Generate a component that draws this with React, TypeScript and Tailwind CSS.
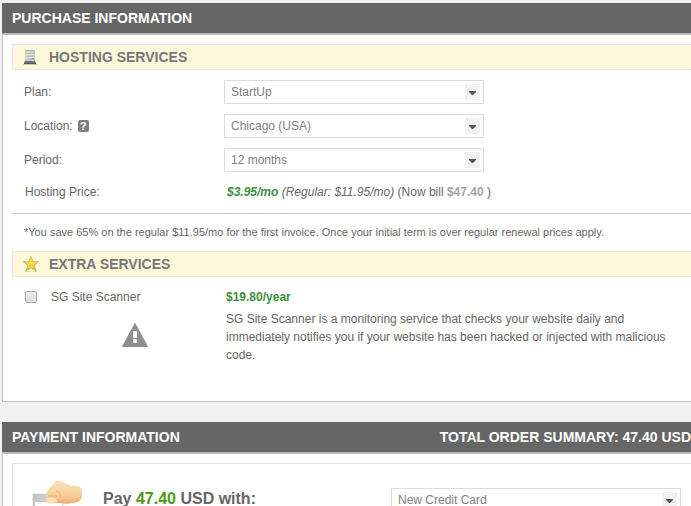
import type { ReactNode } from 'react'

export default function App() {
  return (
    <div className="h-screen overflow-hidden bg-[#f1f1f1] pt-[3px] pl-[2px] font-['Liberation_Sans',Arial,sans-serif] text-xs leading-[18px] text-[#666]">
      {/* Purchase information */}
      <section>
        <PanelHeader title="PURCHASE INFORMATION" />
        <div className="border-b border-l border-[#c4c4c4] bg-white pt-[9px] pb-[37px] pl-[9px]">
          <SectionTitle icon={<ServerIcon />} title="HOSTING SERVICES" />

          <div className="mt-[10px] flex flex-col gap-[10px] pl-3">
            <FormRow id="plan" label="Plan:">
              <SelectBox id="plan" options={['StartUp', 'GrowBig', 'GoGeek']} />
            </FormRow>
            <FormRow id="location" label="Location:" help>
              <SelectBox id="location" options={['Chicago (USA)', 'London (UK)', 'Singapore (SG)']} />
            </FormRow>
            <FormRow id="period" label="Period:">
              <SelectBox id="period" options={['12 months', '24 months', '36 months']} />
            </FormRow>
            <div className="flex leading-5">
              <div className="w-[202px] shrink-0 pl-px">Hosting Price:</div>
              <div className="whitespace-nowrap pl-px">
                <em>
                  <b className="text-[#3c9040]">$3.95/mo</b> (Regular: $11.95/mo)
                </em>{' '}
                (Now bill <b className="text-[#a3a3a3]">$47.40</b> )
              </div>
            </div>
          </div>

          <hr className="mt-[11px] border-[#ccc]" />
          <p className="my-[9px] pl-3 text-[11px] leading-[19px]">
            *You save 65% on the regular $11.95/mo for the first invoice. Once your initial term is over regular
            renewal prices apply.
          </p>

          <SectionTitle icon={<StarIcon />} title="EXTRA SERVICES" />

          <div className="mt-[11px] flex pl-[13px]">
            <div className="w-[201px] shrink-0">
              <label className="flex items-center gap-[14px]">
                <input
                  type="checkbox"
                  className="h-3 w-3 appearance-none rounded-[2px] border border-[#a9a9a9] bg-gradient-to-b from-[#eee] to-[#dcdcdc] checked:bg-[#999]"
                />
                SG Site Scanner
              </label>
              <WarningIcon />
            </div>
            <div className="max-w-[450px]">
              <b className="block text-[#3c9040]">$19.80/year</b>
              <p className="mt-1">
                SG Site Scanner is a monitoring service that checks your website daily and immediately notifies you if
                your website has been hacked or injected with malicious code.
              </p>
            </div>
          </div>
        </div>
      </section>

      {/* Payment information */}
      <section className="mt-5">
        <PanelHeader title="PAYMENT INFORMATION" summary="TOTAL ORDER SUMMARY: 47.40 USD" />
        <div className="border-l border-[#c4c4c4] bg-white pt-[9px] pl-[9px]">
          <div className="flex items-start border-t border-l border-[#e6e6e6] pt-4 pr-[10px] pb-5 pl-[19px]">
            <HandCardIcon />
            <label htmlFor="payment" className="mt-[9px] ml-5 grow text-base leading-5 font-bold">
              Pay <span className="text-[#4f9a14]">47.40</span> USD with:
            </label>
            <div className="mt-2 w-[290px]">
              <SelectBox id="payment" options={['New Credit Card', 'PayPal']} />
            </div>
          </div>
        </div>
      </section>
    </div>
  )
}

function PanelHeader({ title, summary }: { title: string; summary?: string }) {
  return (
    <header className="flex h-8 items-center justify-between border-b-2 border-[#b9b9b9] bg-[#666] pl-[10px] text-sm font-bold whitespace-nowrap text-white">
      <h2>{title}</h2>
      {summary && <span>{summary}</span>}
    </header>
  )
}

function SectionTitle({ icon, title }: { icon: ReactNode; title: string }) {
  return (
    <div className="flex h-[26px] items-center gap-[10px] border-y border-l border-[#e8e8e8] bg-[#fef8da] pl-[10px]">
      {icon}
      <h3 className="text-sm font-bold text-[#777]">{title}</h3>
    </div>
  )
}

function FormRow({ id, label, help, children }: { id: string; label: string; help?: boolean; children: ReactNode }) {
  return (
    <div className="flex items-center">
      <div className="flex w-[200px] shrink-0 items-center gap-[5px]">
        <label htmlFor={id}>{label}</label>
        {help && (
          <button
            type="button"
            aria-label="Help"
            className="flex h-3 w-[11px] items-center justify-center rounded-[2px] bg-[#808080] text-[11px] leading-3 font-bold text-white"
          >
            ?
          </button>
        )}
      </div>
      <div className="w-[260px]">{children}</div>
    </div>
  )
}

function SelectBox({ id, options }: { id: string; options: string[] }) {
  return (
    <div className="relative">
      <select
        id={id}
        className="block h-6 w-full appearance-none border border-[#dcdcdc] bg-white pr-6 pl-[6px] text-xs text-[#808080]"
      >
        {options.map((o) => (
          <option key={o}>{o}</option>
        ))}
      </select>
      <span className="pointer-events-none absolute top-1 right-1 flex h-4 w-[15px] items-center justify-center bg-[#f1f1f1]">
        <svg width="7" height="4" viewBox="0 0 7 4" className="mt-[2px]">
          <path d="M0 0h7v1L4 4H3L0 1z" fill="#555" />
        </svg>
      </span>
    </div>
  )
}

function ServerIcon() {
  return (
    <svg width="16" height="16" viewBox="0 0 16 16">
      <defs>
        <linearGradient id="server" x1="0" x2="1" y1="0" y2="1">
          <stop offset="0" stopColor="#dedede" />
          <stop offset="1" stopColor="#b8b8b8" />
        </linearGradient>
      </defs>
      <path d="M0 15h14v1H0z" fill="#d0caa8" />
      <path d="M2 1h10v11H2z" fill="url(#server)" />
      <path d="M2 1h10v1H2z" fill="#b0b0b0" />
      <path d="M2 4h10v1H2zM2 7h10v1H2z" fill="#bcbcbc" />
      <path d="M2 5h10v1H2zM2 8h10v1H2z" fill="#e4e4e4" />
      <path d="M9 9h2v1H9z" fill="#8c8c8c" />
      <path d="M2 12h10l1 2H1z" fill="#707070" />
      <path d="M1 14h12v1H1z" fill="#555" />
      <path d="M9 12h2v1H9z" fill="#52c43c" />
    </svg>
  )
}

function StarIcon() {
  return (
    <svg width="16" height="16" viewBox="0 0 16 16">
      <defs>
        <linearGradient id="star" x1="0" x2="0" y1="0" y2="1">
          <stop offset="0" stopColor="#f2ea7a" />
          <stop offset=".5" stopColor="#ecdc4a" />
          <stop offset="1" stopColor="#dcc72a" />
        </linearGradient>
      </defs>
      <path d="M2 15h4v1H2zM10 15h4v1h-4z" fill="#dcd5aa" />
      <path
        d="M8 .5L10 5.700h5.500l-4.300 3.600L13 15l-5-3.200L3 15l1.800-5.700L.5 5.700H6z"
        fill="url(#star)"
        stroke="#c0ab30"
        strokeWidth=".7"
        strokeLinejoin="round"
      />
    </svg>
  )
}

function WarningIcon() {
  return (
    <svg width="26" height="24" viewBox="0 0 26 24" className="mt-[17px] ml-[97px]">
      <path d="M13 .5L25.5 23.5H.5z" fill="#8f8f8f" stroke="#8f8f8f" strokeLinejoin="round" />
      <rect x="11" y="8" width="4" height="7" rx="1" fill="#fff" />
      <rect x="11" y="16" width="4" height="4" rx="1" fill="#fff" />
    </svg>
  )
}

function HandCardIcon() {
  return (
    <svg width="51" height="40" viewBox="0 0 51 40" className="shrink-0">
      <defs>
        <linearGradient id="skin" x1="0" x2="0" y1="0" y2="1">
          <stop offset="0" stopColor="#fbe2b8" />
          <stop offset=".6" stopColor="#f7d09b" />
          <stop offset="1" stopColor="#e8b071" />
        </linearGradient>
        <linearGradient id="card" x1="0" x2="1" y1="0" y2="0">
          <stop offset="0" stopColor="#c3c3c5" />
          <stop offset="1" stopColor="#e2e2e4" />
        </linearGradient>
      </defs>
      <path d="M2 14h29v24H2q-1 0-1-1V15q0-1 1-1z" fill="url(#card)" stroke="#bbb" strokeWidth=".5" />
      <path d="M3 22h27v5H3z" fill="#fff" />
      <path
        d="M14 14C16 9 20 5 23 2c2-2 5-1 8 0 5 3 8 4 13 4 4 0 6 2 6 6v4c0 4-4 6-8 7-5 1-10 1-13 0H18c-3 0-5-2-4-9z"
        fill="url(#skin)"
      />
      <path d="M24 11c4 1 5 4 4 7" fill="none" stroke="#e3ad70" strokeWidth=".7" />
      <path d="M16 16h9" fill="none" stroke="#dca05c" strokeWidth=".7" />
      <rect x="14" y="17" width="11" height="6" rx="3" fill="#fde0b8" stroke="#ecbc84" strokeWidth=".4" />
    </svg>
  )
}
